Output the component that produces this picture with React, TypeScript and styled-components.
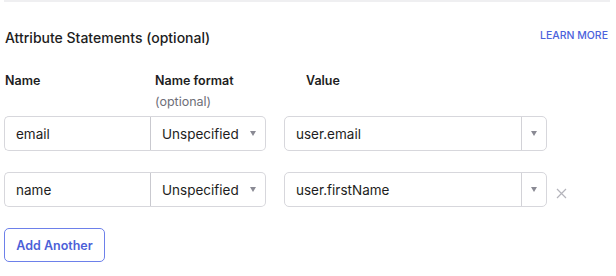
import React from "react";
import styled, { createGlobalStyle } from "styled-components";

const Global = createGlobalStyle`
  html, body { margin: 0; padding: 0; background: #fff; }
  body { font-family: Inter, "Noto Sans", Arial, sans-serif; color: #1d1d21; }
  * { box-sizing: border-box; }
`;

const Page = styled.div`
  width: 616px;
  height: 276px;
  padding: 0 7px 0 4px;
  overflow: hidden;
`;

const TopRule = styled.div`
  height: 2px;
  background: #efeff1;
  margin-right: -1px;
`;

const TitleRow = styled.div`
  display: flex;
  justify-content: space-between;
  align-items: flex-start;
  margin-top: 26px;
`;

const Title = styled.h2`
  margin: 0 0 0 1px;
  font-size: 14px;
  font-weight: 500;
  line-height: 19px;
`;

const LearnMore = styled.a`
  font-size: 10.5px;
  font-weight: 500;
  color: #4c62dc;
  text-decoration: none;
  line-height: 14px;
  margin-top: 1px;
  margin-right: 1px;
`;

const Columns = `
  display: grid;
  grid-template-columns: 146px 116px 281px 30px;
`;

const HeaderRow = styled.div`
  ${Columns}
  margin-top: 26px;
`;

const Header = styled.div<{ $indent?: number }>`
  font-size: 12.5px;
  font-weight: 600;
  line-height: 16px;
  padding-left: ${(p) => p.$indent ?? 0}px;
  height: 43px;
`;

const Sub = styled.div`
  font-size: 12.5px;
  font-weight: 400;
  color: #6e6e78;
  margin-top: 5px;
`;

const Rows = styled.div`
  display: flex;
  flex-direction: column;
  gap: 21px;
`;

const Row = styled.div`
  ${Columns}
  align-items: center;
`;

const Field = styled.div<{ $side?: "left" | "right" | "full" }>`
  height: 35px;
  border: 1px solid #d7d7dc;
  display: flex;
  align-items: center;
  font-size: 13.5px;
  color: #1d1d21;
  background: #fff;
  border-radius: ${(p) =>
    p.$side === "left" ? "5px 0 0 5px" : p.$side === "right" ? "0 5px 5px 0" : "5px"};
  ${(p) => (p.$side === "left" ? "border-right: 0;" : "")}
  ${(p) => (p.$side === "right" ? "border-left: 1.5px solid #c9c9cf;" : "")}
`;

const FieldText = styled.span`
  flex: 1;
  padding-left: 11px;
  white-space: nowrap;
`;

const ArrowCell = styled.span<{ $divider?: boolean }>`
  width: ${(p) => (p.$divider ? 25 : 24)}px;
  align-self: stretch;
  display: flex;
  align-items: center;
  justify-content: center;
  ${(p) => (p.$divider ? "border-left: 1.5px solid #d2d2d7;" : "")}
`;

const Caret = styled.span`
  width: 0;
  height: 0;
  border-left: 3.5px solid transparent;
  border-right: 3.5px solid transparent;
  border-top: 5px solid #8a8a94;
  margin-top: -1px;
`;

const ValueWrap = styled.div`
  margin-left: 18px;
  width: 263px;
`;

const Remove = styled.button`
  border: 0;
  background: none;
  padding: 0;
  margin-left: 8px;
  margin-top: 8px;
  width: 12px;
  height: 12px;
  display: flex;
  align-items: center;
  justify-content: center;
`;

const AddButton = styled.button`
  margin-top: 21px;
  height: 34px;
  width: 101px;
  border: 1px solid #6d80ea;
  border-radius: 5px;
  background: #fff;
  color: #4c5fd8;
  font-family: Inter, "Noto Sans", Arial, sans-serif;
  font-size: 12.5px;
  font-weight: 600;
  padding: 0;
`;

const rows = [
  { name: "email", value: "user.email", removable: false },
  { name: "name", value: "user.firstName", removable: true },
];

export default function App() {
  return (
    <Page>
      <Global />
      <TopRule />
      <TitleRow>
        <Title>Attribute Statements (optional)</Title>
        <LearnMore href="#">LEARN MORE</LearnMore>
      </TitleRow>
      <HeaderRow>
        <Header $indent={1}>Name</Header>
        <Header $indent={5}>
          Name format
          <Sub>(optional)</Sub>
        </Header>
        <Header $indent={40}>Value</Header>
        <div />
      </HeaderRow>
      <Rows>
        {rows.map((r) => (
          <Row key={r.name}>
            <Field $side="left">
              <FieldText>{r.name}</FieldText>
            </Field>
            <Field $side="right">
              <FieldText>Unspecified</FieldText>
              <ArrowCell>
                <Caret />
              </ArrowCell>
            </Field>
            <ValueWrap>
              <Field $side="full">
                <FieldText>{r.value}</FieldText>
                <ArrowCell $divider>
                  <Caret />
                </ArrowCell>
              </Field>
            </ValueWrap>
            {r.removable ? (
              <Remove aria-label="Remove">
                <svg width="11" height="11" viewBox="0 0 11 11">
                  <path d="M1 1L10 10M10 1L1 10" stroke="#b4b4bb" strokeWidth="1.2" />
                </svg>
              </Remove>
            ) : (
              <div />
            )}
          </Row>
        ))}
      </Rows>
      <AddButton>Add Another</AddButton>
    </Page>
  );
}
